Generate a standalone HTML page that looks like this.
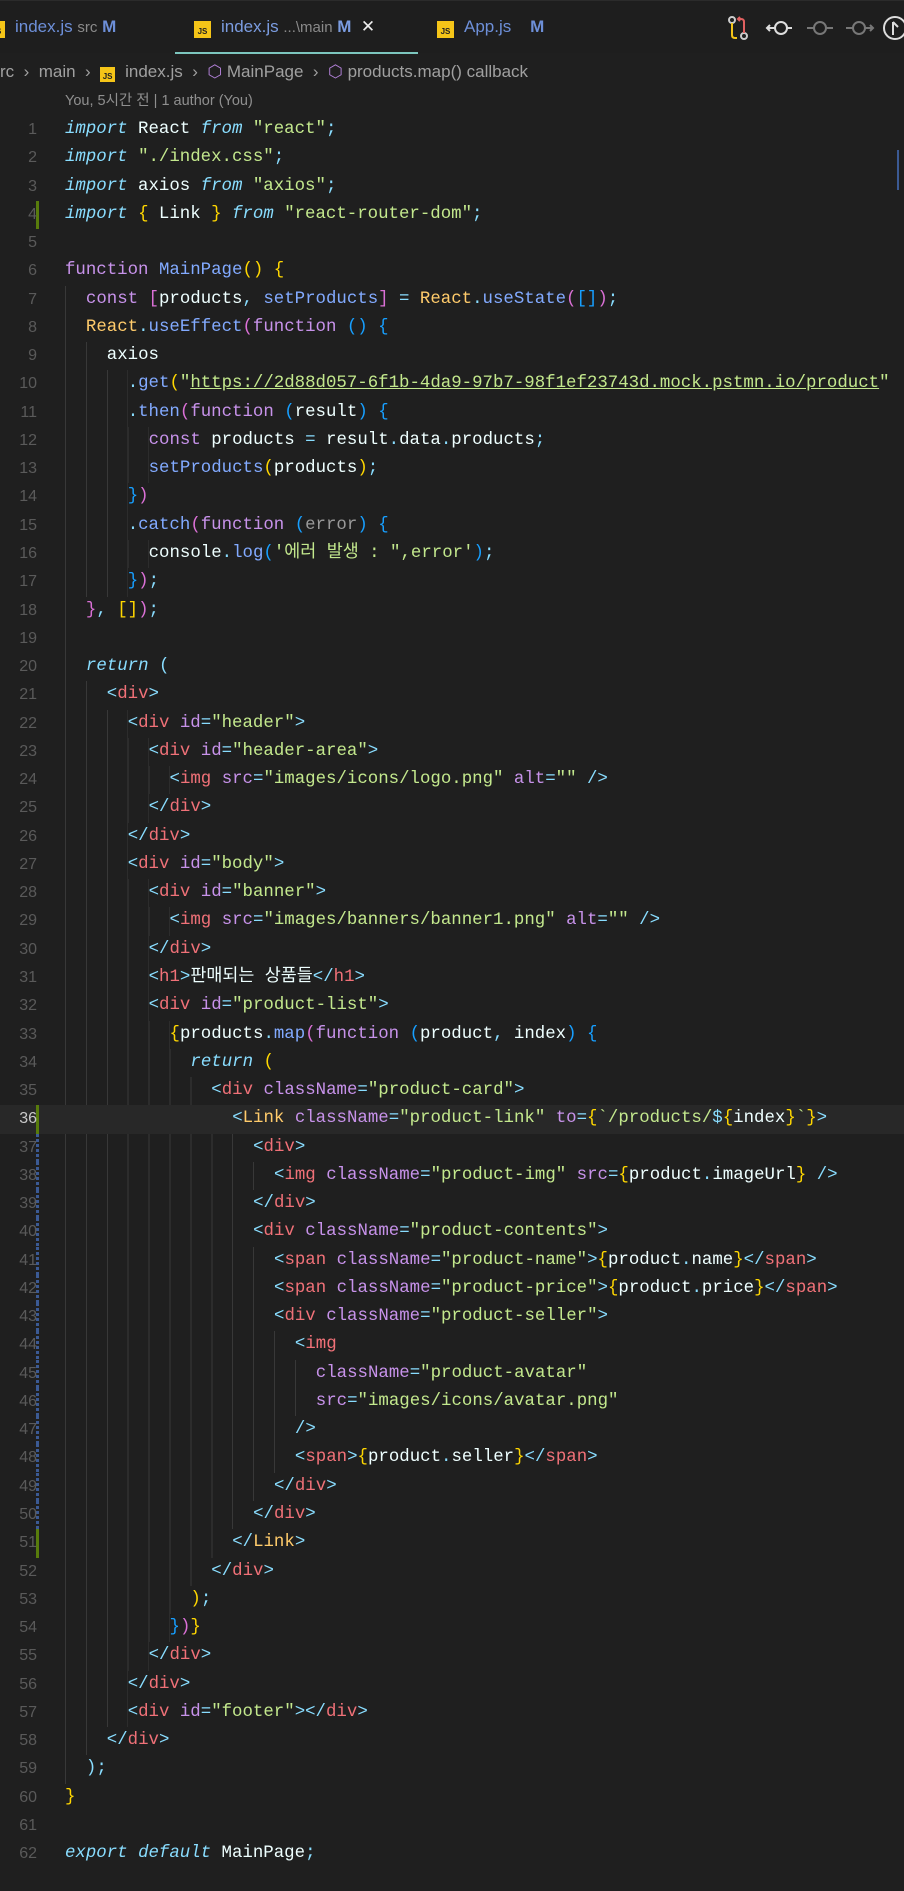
<!DOCTYPE html>
<html><head><meta charset="utf-8"><style>
html,body{margin:0;padding:0}
body{width:904px;height:1891px;background:#1f1f1f;overflow:hidden;font-family:"Liberation Sans","Noto Sans CJK KR",sans-serif;position:relative}
.tabs{position:absolute;left:0;top:0;width:904px;height:53px;background:#1e1e1e;border-top:1px solid #2b2b2b;box-sizing:border-box}
.tab{position:absolute;top:0;height:53px;line-height:52px;font-size:17px;color:#6d8fd8;white-space:nowrap}
.js{display:inline-block;width:17px;height:17px;background:#f5c518;color:#222;font-size:8px;font-weight:bold;line-height:22px;text-align:center;vertical-align:-2px;margin-right:10px}
.dim{color:#8a8a8a;font-size:15px}
.bc{position:absolute;top:58px;left:0;font-size:17px;color:#a0a0a0;line-height:28px;white-space:nowrap}
.cl{position:absolute;top:91px;left:65px;font-size:14.5px;color:#8f8f8f;line-height:20px}
.code{position:absolute;top:116px;left:0;width:904px;font-family:"Liberation Mono","Noto Sans CJK KR",monospace;font-size:17.4px;white-space:normal}
.l{position:relative;height:28.28px;line-height:28.28px;padding-left:65px;color:#eeffff;white-space:pre;overflow:hidden}
.n{position:absolute;left:0;top:0;width:37px;text-align:right;color:#5a5a5a;font-size:16px;font-family:"Liberation Sans",sans-serif}
.g{display:inline-block;height:28.28px;vertical-align:top;background:repeating-linear-gradient(to right,#383838 0 1px,transparent 1px 20.9px)}
.cur{background:#282828}
.cur .n{color:#c8c8c8}
.mk{position:absolute;left:36px;top:0;width:3px;height:28.28px;background:#587c0c}
.mb{position:absolute;left:36px;top:0;width:3px;height:28.28px;background:repeating-linear-gradient(#3b5a94 0 3px,transparent 3px 5px)}
.k{color:#c792ea}.ki{color:#89ddff;font-style:italic}.s{color:#c3e88d}.f{color:#82aaff}.t{color:#f07178}.p{color:#89ddff}.y{color:#ffd700}.m{color:#da70d6}.b{color:#179fff}.R{color:#ffcb6b}.e{color:#9a9a9a}
.u{text-decoration:underline;text-decoration-color:#c3e88d}
</style></head><body>
<div class="tabs">
 <div class="tab" style="left:-12px"><span class="js">JS</span>index.js <span class="dim">src</span> <b>M</b></div>
 <div class="tab" style="left:175px;width:243px;border-bottom:2px solid #7cc6be;box-sizing:border-box;padding-left:19px;color:#7b9ce0"><span class="js">JS</span>index.js <span class="dim">...\main</span> <b>M</b>&nbsp;&nbsp;<span style="color:#eee">✕</span></div>
 <div class="tab" style="left:437px"><span class="js">JS</span>App.js &nbsp;&nbsp; <b>M</b></div>
 <svg style="position:absolute;left:725px;top:14px" width="180" height="26" viewBox="0 0 180 26" fill="none" stroke-width="2">
  <circle cx="7" cy="5" r="3" stroke="#ccc"/><path d="M7 8v12q0 3 3 3h2" stroke="#f5c518"/><circle cx="19" cy="21" r="3" stroke="#ccc"/><path d="M19 18V7q0-3-3-3h-3m2-2l-2 2 2 2" stroke="#e06060"/>
  <circle cx="56" cy="13" r="6" stroke="#ddd"/><path d="M42 13h8m12 0h5M45 10l-3 3 3 3" stroke="#ddd"/>
  <circle cx="95" cy="13" r="6" stroke="#777"/><path d="M82 13h7m12 0h7" stroke="#777"/>
  <circle cx="134" cy="13" r="6" stroke="#777"/><path d="M121 13h7m12 0h8m-3-3l3 3-3 3" stroke="#777"/>
  <circle cx="170" cy="13" r="11" stroke="#ddd"/><path d="M168 7v13m0-13l5 5" stroke="#ddd"/>
 </svg>
</div>
<div class="bc">rc &nbsp;›&nbsp; main &nbsp;›&nbsp; <span class="js" style="width:15px;height:15px;line-height:19px">JS</span>index.js &nbsp;›&nbsp; <span style="color:#b180d7">⬡</span> MainPage &nbsp;›&nbsp; <span style="color:#b180d7">⬡</span> products.map() callback</div>
<div class="cl">You, 5시간 전 | 1 author (You)</div>
<div style="position:absolute;left:897px;top:150px;width:2px;height:40px;background:#3b5a94"></div>
<div class="code"><div class="l"><span class="n">1</span><span class="ki">import</span> React <span class="ki">from</span> <span class="s">"react"</span><span class="p">;</span></div>
<div class="l"><span class="n">2</span><span class="ki">import</span> <span class="s">"./index.css"</span><span class="p">;</span></div>
<div class="l"><span class="n">3</span><span class="ki">import</span> axios <span class="ki">from</span> <span class="s">"axios"</span><span class="p">;</span></div>
<div class="l"><span class="mk"></span><span class="n">4</span><span class="ki">import</span> <span class="y">{</span> Link <span class="y">}</span> <span class="ki">from</span> <span class="s">"react-router-dom"</span><span class="p">;</span></div>
<div class="l"><span class="n">5</span></div>
<div class="l"><span class="n">6</span><span class="k">function</span> <span class="f">MainPage</span><span class="y">()</span> <span class="y">{</span></div>
<div class="l"><span class="n">7</span><span class="g" style="width:20.9px"></span><span class="k">const</span> <span class="m">[</span>products<span class="p">,</span> <span class="f">setProducts</span><span class="m">]</span> <span class="p">=</span> <span class="R">React</span><span class="p">.</span><span class="f">useState</span><span class="m">(</span><span class="b">[]</span><span class="m">)</span><span class="p">;</span></div>
<div class="l"><span class="n">8</span><span class="g" style="width:20.9px"></span><span class="R">React</span><span class="p">.</span><span class="f">useEffect</span><span class="m">(</span><span class="k">function</span> <span class="b">()</span> <span class="b">{</span></div>
<div class="l"><span class="n">9</span><span class="g" style="width:41.8px"></span>axios</div>
<div class="l"><span class="n">10</span><span class="g" style="width:62.7px"></span><span class="p">.</span><span class="f">get</span><span class="y">(</span><span class="s">"<span class="u">https://2d88d057-6f1b-4da9-97b7-98f1ef23743d.mock.pstmn.io/product</span>"</span></div>
<div class="l"><span class="n">11</span><span class="g" style="width:62.7px"></span><span class="p">.</span><span class="f">then</span><span class="m">(</span><span class="k">function</span> <span class="b">(</span>result<span class="b">)</span> <span class="b">{</span></div>
<div class="l"><span class="n">12</span><span class="g" style="width:83.6px"></span><span class="k">const</span> products <span class="p">=</span> result<span class="p">.</span>data<span class="p">.</span>products<span class="p">;</span></div>
<div class="l"><span class="n">13</span><span class="g" style="width:83.6px"></span><span class="f">setProducts</span><span class="y">(</span>products<span class="y">)</span><span class="p">;</span></div>
<div class="l"><span class="n">14</span><span class="g" style="width:62.7px"></span><span class="b">}</span><span class="m">)</span></div>
<div class="l"><span class="n">15</span><span class="g" style="width:62.7px"></span><span class="p">.</span><span class="f">catch</span><span class="m">(</span><span class="k">function</span> <span class="b">(</span><span class="e">error</span><span class="b">)</span> <span class="b">{</span></div>
<div class="l"><span class="n">16</span><span class="g" style="width:83.6px"></span>console<span class="p">.</span><span class="f">log</span><span class="b">(</span><span class="s">'에러 발생 : ",error'</span><span class="b">)</span><span class="p">;</span></div>
<div class="l"><span class="n">17</span><span class="g" style="width:62.7px"></span><span class="b">}</span><span class="m">)</span><span class="p">;</span></div>
<div class="l"><span class="n">18</span><span class="g" style="width:20.9px"></span><span class="m">}</span><span class="p">,</span> <span class="y">[]</span><span class="m">)</span><span class="p">;</span></div>
<div class="l"><span class="n">19</span><span class="g" style="width:20.9px"></span></div>
<div class="l"><span class="n">20</span><span class="g" style="width:20.9px"></span><span class="ki">return</span> <span class="p">(</span></div>
<div class="l"><span class="n">21</span><span class="g" style="width:41.8px"></span><span class="p">&lt;</span><span class="t">div</span><span class="p">&gt;</span></div>
<div class="l"><span class="n">22</span><span class="g" style="width:62.7px"></span><span class="p">&lt;</span><span class="t">div</span> <span class="k">id</span><span class="p">=</span><span class="s">"header"</span><span class="p">&gt;</span></div>
<div class="l"><span class="n">23</span><span class="g" style="width:83.6px"></span><span class="p">&lt;</span><span class="t">div</span> <span class="k">id</span><span class="p">=</span><span class="s">"header-area"</span><span class="p">&gt;</span></div>
<div class="l"><span class="n">24</span><span class="g" style="width:104.5px"></span><span class="p">&lt;</span><span class="t">img</span> <span class="k">src</span><span class="p">=</span><span class="s">"images/icons/logo.png"</span> <span class="k">alt</span><span class="p">=</span><span class="s">""</span> <span class="p">/&gt;</span></div>
<div class="l"><span class="n">25</span><span class="g" style="width:83.6px"></span><span class="p">&lt;/</span><span class="t">div</span><span class="p">&gt;</span></div>
<div class="l"><span class="n">26</span><span class="g" style="width:62.7px"></span><span class="p">&lt;/</span><span class="t">div</span><span class="p">&gt;</span></div>
<div class="l"><span class="n">27</span><span class="g" style="width:62.7px"></span><span class="p">&lt;</span><span class="t">div</span> <span class="k">id</span><span class="p">=</span><span class="s">"body"</span><span class="p">&gt;</span></div>
<div class="l"><span class="n">28</span><span class="g" style="width:83.6px"></span><span class="p">&lt;</span><span class="t">div</span> <span class="k">id</span><span class="p">=</span><span class="s">"banner"</span><span class="p">&gt;</span></div>
<div class="l"><span class="n">29</span><span class="g" style="width:104.5px"></span><span class="p">&lt;</span><span class="t">img</span> <span class="k">src</span><span class="p">=</span><span class="s">"images/banners/banner1.png"</span> <span class="k">alt</span><span class="p">=</span><span class="s">""</span> <span class="p">/&gt;</span></div>
<div class="l"><span class="n">30</span><span class="g" style="width:83.6px"></span><span class="p">&lt;/</span><span class="t">div</span><span class="p">&gt;</span></div>
<div class="l"><span class="n">31</span><span class="g" style="width:83.6px"></span><span class="p">&lt;</span><span class="t">h1</span><span class="p">&gt;</span>판매되는 상품들<span class="p">&lt;/</span><span class="t">h1</span><span class="p">&gt;</span></div>
<div class="l"><span class="n">32</span><span class="g" style="width:83.6px"></span><span class="p">&lt;</span><span class="t">div</span> <span class="k">id</span><span class="p">=</span><span class="s">"product-list"</span><span class="p">&gt;</span></div>
<div class="l"><span class="n">33</span><span class="g" style="width:104.5px"></span><span class="y">{</span>products<span class="p">.</span><span class="f">map</span><span class="m">(</span><span class="k">function</span> <span class="b">(</span>product<span class="p">,</span> index<span class="b">)</span> <span class="b">{</span></div>
<div class="l"><span class="n">34</span><span class="g" style="width:125.4px"></span><span class="ki">return</span> <span class="y">(</span></div>
<div class="l"><span class="n">35</span><span class="g" style="width:146.3px"></span><span class="p">&lt;</span><span class="t">div</span> <span class="k">className</span><span class="p">=</span><span class="s">"product-card"</span><span class="p">&gt;</span></div>
<div class="l cur"><span class="mk"></span><span class="n">36</span><span class="g" style="width:167.2px;background:none"></span><span class="p">&lt;</span><span class="R">Link</span> <span class="k">className</span><span class="p">=</span><span class="s">"product-link"</span> <span class="k">to</span><span class="p">=</span><span class="y">{</span><span class="s">`/products/</span><span class="p">$</span><span class="y">{</span>index<span class="y">}</span><span class="s">`</span><span class="y">}</span><span class="p">&gt;</span></div>
<div class="l"><span class="mb"></span><span class="n">37</span><span class="g" style="width:188.1px"></span><span class="p">&lt;</span><span class="t">div</span><span class="p">&gt;</span></div>
<div class="l"><span class="mb"></span><span class="n">38</span><span class="g" style="width:209px"></span><span class="p">&lt;</span><span class="t">img</span> <span class="k">className</span><span class="p">=</span><span class="s">"product-img"</span> <span class="k">src</span><span class="p">=</span><span class="y">{</span>product<span class="p">.</span>imageUrl<span class="y">}</span> <span class="p">/&gt;</span></div>
<div class="l"><span class="mb"></span><span class="n">39</span><span class="g" style="width:188.1px"></span><span class="p">&lt;/</span><span class="t">div</span><span class="p">&gt;</span></div>
<div class="l"><span class="mb"></span><span class="n">40</span><span class="g" style="width:188.1px"></span><span class="p">&lt;</span><span class="t">div</span> <span class="k">className</span><span class="p">=</span><span class="s">"product-contents"</span><span class="p">&gt;</span></div>
<div class="l"><span class="mb"></span><span class="n">41</span><span class="g" style="width:209px"></span><span class="p">&lt;</span><span class="t">span</span> <span class="k">className</span><span class="p">=</span><span class="s">"product-name"</span><span class="p">&gt;</span><span class="y">{</span>product<span class="p">.</span>name<span class="y">}</span><span class="p">&lt;/</span><span class="t">span</span><span class="p">&gt;</span></div>
<div class="l"><span class="mb"></span><span class="n">42</span><span class="g" style="width:209px"></span><span class="p">&lt;</span><span class="t">span</span> <span class="k">className</span><span class="p">=</span><span class="s">"product-price"</span><span class="p">&gt;</span><span class="y">{</span>product<span class="p">.</span>price<span class="y">}</span><span class="p">&lt;/</span><span class="t">span</span><span class="p">&gt;</span></div>
<div class="l"><span class="mb"></span><span class="n">43</span><span class="g" style="width:209px"></span><span class="p">&lt;</span><span class="t">div</span> <span class="k">className</span><span class="p">=</span><span class="s">"product-seller"</span><span class="p">&gt;</span></div>
<div class="l"><span class="mb"></span><span class="n">44</span><span class="g" style="width:229.9px"></span><span class="p">&lt;</span><span class="t">img</span></div>
<div class="l"><span class="mb"></span><span class="n">45</span><span class="g" style="width:250.8px"></span><span class="k">className</span><span class="p">=</span><span class="s">"product-avatar"</span></div>
<div class="l"><span class="mb"></span><span class="n">46</span><span class="g" style="width:250.8px"></span><span class="k">src</span><span class="p">=</span><span class="s">"images/icons/avatar.png"</span></div>
<div class="l"><span class="mb"></span><span class="n">47</span><span class="g" style="width:229.9px"></span><span class="p">/&gt;</span></div>
<div class="l"><span class="mb"></span><span class="n">48</span><span class="g" style="width:229.9px"></span><span class="p">&lt;</span><span class="t">span</span><span class="p">&gt;</span><span class="y">{</span>product<span class="p">.</span>seller<span class="y">}</span><span class="p">&lt;/</span><span class="t">span</span><span class="p">&gt;</span></div>
<div class="l"><span class="mb"></span><span class="n">49</span><span class="g" style="width:209px"></span><span class="p">&lt;/</span><span class="t">div</span><span class="p">&gt;</span></div>
<div class="l"><span class="mb"></span><span class="n">50</span><span class="g" style="width:188.1px"></span><span class="p">&lt;/</span><span class="t">div</span><span class="p">&gt;</span></div>
<div class="l"><span class="mk"></span><span class="n">51</span><span class="g" style="width:167.2px"></span><span class="p">&lt;/</span><span class="R">Link</span><span class="p">&gt;</span></div>
<div class="l"><span class="n">52</span><span class="g" style="width:146.3px"></span><span class="p">&lt;/</span><span class="t">div</span><span class="p">&gt;</span></div>
<div class="l"><span class="n">53</span><span class="g" style="width:125.4px"></span><span class="y">)</span><span class="p">;</span></div>
<div class="l"><span class="n">54</span><span class="g" style="width:104.5px"></span><span class="b">}</span><span class="m">)</span><span class="y">}</span></div>
<div class="l"><span class="n">55</span><span class="g" style="width:83.6px"></span><span class="p">&lt;/</span><span class="t">div</span><span class="p">&gt;</span></div>
<div class="l"><span class="n">56</span><span class="g" style="width:62.7px"></span><span class="p">&lt;/</span><span class="t">div</span><span class="p">&gt;</span></div>
<div class="l"><span class="n">57</span><span class="g" style="width:62.7px"></span><span class="p">&lt;</span><span class="t">div</span> <span class="k">id</span><span class="p">=</span><span class="s">"footer"</span><span class="p">&gt;&lt;/</span><span class="t">div</span><span class="p">&gt;</span></div>
<div class="l"><span class="n">58</span><span class="g" style="width:41.8px"></span><span class="p">&lt;/</span><span class="t">div</span><span class="p">&gt;</span></div>
<div class="l"><span class="n">59</span><span class="g" style="width:20.9px"></span><span class="p">)</span><span class="p">;</span></div>
<div class="l"><span class="n">60</span><span class="y">}</span></div>
<div class="l"><span class="n">61</span></div>
<div class="l"><span class="n">62</span><span class="ki">export</span> <span class="ki">default</span> MainPage<span class="p">;</span></div></div>
</body></html>
